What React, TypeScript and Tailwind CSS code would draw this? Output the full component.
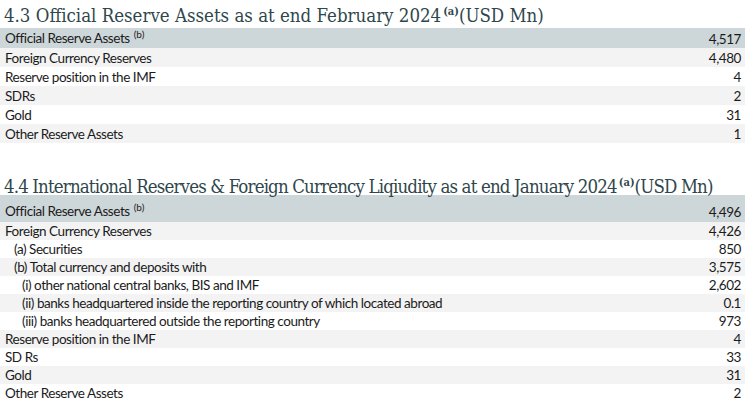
import React from "react";

type Row = { label: string; value: string; indent?: number; sup?: string };

const table1: Row[] = [
  { label: "Official Reserve Assets", value: "4,517", sup: "(b)" },
  { label: "Foreign Currency Reserves", value: "4,480" },
  { label: "Reserve position in the IMF", value: "4" },
  { label: "SDRs", value: "2" },
  { label: "Gold", value: "31" },
  { label: "Other Reserve Assets", value: "1" },
];

const table2: Row[] = [
  { label: "Official Reserve Assets", value: "4,496", sup: "(b)" },
  { label: "Foreign Currency Reserves", value: "4,426" },
  { label: "(a) Securities", value: "850", indent: 1 },
  { label: "(b) Total currency and deposits with", value: "3,575", indent: 1 },
  { label: "(i) other national central banks, BIS and IMF", value: "2,602", indent: 2 },
  { label: "(ii) banks headquartered inside the reporting country of which located abroad", value: "0.1", indent: 2 },
  { label: "(iii) banks headquartered outside the reporting country", value: "973", indent: 2 },
  { label: "Reserve position in the IMF", value: "4" },
  { label: "SD Rs", value: "33" },
  { label: "Gold", value: "31" },
  { label: "Other Reserve Assets", value: "2" },
];

function Title({ children, track }: { children: React.ReactNode; track: string }) {
  return (
    <h2
      className="h-[22px] pl-[4px] text-[18.5px] leading-[22px] text-[#2f474c] whitespace-nowrap"
      style={{ fontFamily: '"DejaVu Serif", serif', fontStretch: "condensed" }}
    >
      <span className={track}>{children}</span>
      <span className="relative -top-[7px] ml-[2px] text-[11px] font-bold">(a)</span>
      <span className={track}>(USD Mn)</span>
    </h2>
  );
}

function DataTable({ rows, rowH, headH, headAlign }: { rows: Row[]; rowH: string; headH: string; headAlign: string }) {
  return (
    <div className="mr-[5px] text-[13.5px] leading-[14px] text-[#1b1b1b]" style={{ fontFamily: "Lato, sans-serif" }}>
      {rows.map((r, i) => {
        const bg = i === 0 ? "bg-[#cdd6d8]" : i % 2 === 1 ? "bg-[#f3f3f3]" : "bg-white";
        const pad = r.indent === 2 ? "pl-[22px]" : r.indent === 1 ? "pl-[14px]" : "pl-[5px]";
        return (
          <div
            key={i}
            className={`flex justify-between pr-[4px] tracking-[-0.45px] ${bg} ${i === 0 ? `${headH} ${headAlign}` : `${rowH} items-center`}`}
          >
            <span className={pad}>
              {r.label}
              {r.sup && <span className="relative -top-[5px] ml-[4px] text-[10px] tracking-normal">{r.sup}</span>}
            </span>
            <span>{r.value}</span>
          </div>
        );
      })}
    </div>
  );
}

export default function App() {
  return (
    <div className="w-[750px] h-[409px] overflow-hidden bg-white">
      <div className="pt-[5px]">
        <Title track="tracking-[0px]">4.3 Official Reserve Assets as at end February 2024</Title>
      </div>
      <div className="mt-[1px]">
        <DataTable rows={table1} rowH="h-[19px] pt-[1px]" headH="h-[20px]" headAlign="items-end pb-[2px]" />
      </div>
      <div className="mt-[33px]">
        <Title track="tracking-[-0.85px]">4.4 International Reserves &amp; Foreign Currency Liqiudity as at end January 2024</Title>
      </div>
      <div className="mt-[-3px]">
        <DataTable rows={table2} rowH="h-[18px]" headH="h-[27px]" headAlign="items-end pb-[3px]" />
      </div>
    </div>
  );
}
